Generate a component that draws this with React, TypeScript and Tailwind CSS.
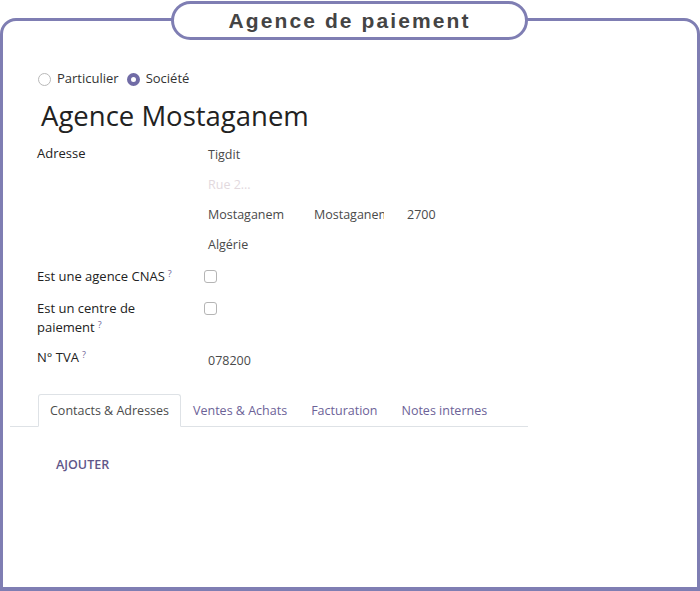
import React from 'react';

const purple = 'border-[#7f7eb3]';

const Radio = ({ checked, label }: { checked?: boolean; label: string }) => (
  <label className="flex items-center gap-[6px]">
    <span
      className={`h-[13px] w-[13px] rounded-full ${
        checked ? 'border-[4px] border-[#716ca6] bg-white' : 'border border-[#b9b9b9] bg-white'
      }`}
    />
    <span>{label}</span>
  </label>
);

const Check = () => <span className="block h-[13px] w-[13px] rounded-[3px] border border-[#b5b5b5] bg-white" />;

const Hint = () => <sup className="ml-[3px] text-[9px] text-[#6f6599]">?</sup>;

const tabs = ['Contacts & Adresses', 'Ventes & Achats', 'Facturation', 'Notes internes'];

export default function App() {
  return (
    <div
      className="relative h-[591px] w-[700px] bg-white pt-[18px] text-[13px] text-[#222]"
      style={{ fontFamily: '"Open Sans", "Noto Sans", sans-serif' }}
    >
      <div className={`h-full rounded-t-[16px] border-[3px] border-b-4 ${purple}`}>
        <div className="pl-[34px] pt-[48px]">
          {/* type de partenaire */}
          <div className="flex h-[20px] items-center gap-[8px] pl-px text-[#333]">
            <Radio label="Particulier" />
            <Radio checked label="Société" />
          </div>

          <h1 className="ml-[4px] mt-[10px] h-[34px] text-[27.5px] leading-[34px] text-[#222]">Agence Mostaganem</h1>

          {/* adresse */}
          <div className="mt-[7px] flex">
            <div className="w-[167px] font-medium leading-[27px]">Adresse</div>
            <div className="flex flex-col text-[12.5px] text-[#4a4a4a]">
              <div className="h-[30px] px-1 leading-[30px]">Tigdit</div>
              <div className="h-[30px] px-1 leading-[30px] text-[#e2d9de]">Rue 2...</div>
              <div className="flex h-[30px] leading-[30px]">
                <div className="w-[106px] px-1">Mostaganem</div>
                <div className="w-[74px] overflow-hidden whitespace-nowrap pl-1">Mostaganem</div>
                <div className="ml-[19px] px-1">2700</div>
              </div>
              <div className="h-[30px] px-1 leading-[30px]">Algérie</div>
            </div>
          </div>

          <div className="mt-[7px] flex items-center">
            <div className="w-[167px] font-medium leading-[19px]">
              Est une agence CNAS
              <Hint />
            </div>
            <Check />
          </div>

          <div className="mt-[13px] flex">
            <div className="mr-[17px] w-[150px] font-medium leading-[19px]">
              Est un centre de paiement
              <Hint />
            </div>
            <div className="pt-[3px]">
              <Check />
            </div>
          </div>

          <div className="mt-[11px] flex">
            <div className="w-[167px] font-medium leading-[19px]">
              N° TVA
              <Hint />
            </div>
            <div className="px-1 pt-[3px] text-[12.5px] leading-[19px] text-[#4a4a4a]">078200</div>
          </div>
        </div>

        {/* onglets */}
        <div className="ml-[7px] mt-[24px] flex w-[518px] border-b border-[#dee2e6] pl-[28px] text-[12.5px]">
          {tabs.map((t, i) => (
            <div
              key={t}
              className={`-mb-px h-[33px] rounded-t-[3px] border px-[11px] leading-[32px] ${
                i === 0 ? 'border-[#dee2e6] border-b-white bg-white text-[#4c4c4c]' : 'border-transparent text-[#6c6297]'
              }`}
            >
              {t}
            </div>
          ))}
        </div>

        <div className="ml-[53px] mt-[29px] text-[12.5px] font-semibold text-[#5f5789]">AJOUTER</div>
      </div>

      <div
        className={`absolute left-[171px] top-[1px] flex h-[39px] w-[357px] items-center justify-center rounded-[20px] border-[3px] bg-white ${purple}`}
      >
        <span
          className="text-[21px] font-bold tracking-[2.1px] text-[#444]"
          style={{ fontFamily: '"Liberation Sans", Arial, sans-serif' }}
        >
          Agence de paiement
        </span>
      </div>
    </div>
  );
}
